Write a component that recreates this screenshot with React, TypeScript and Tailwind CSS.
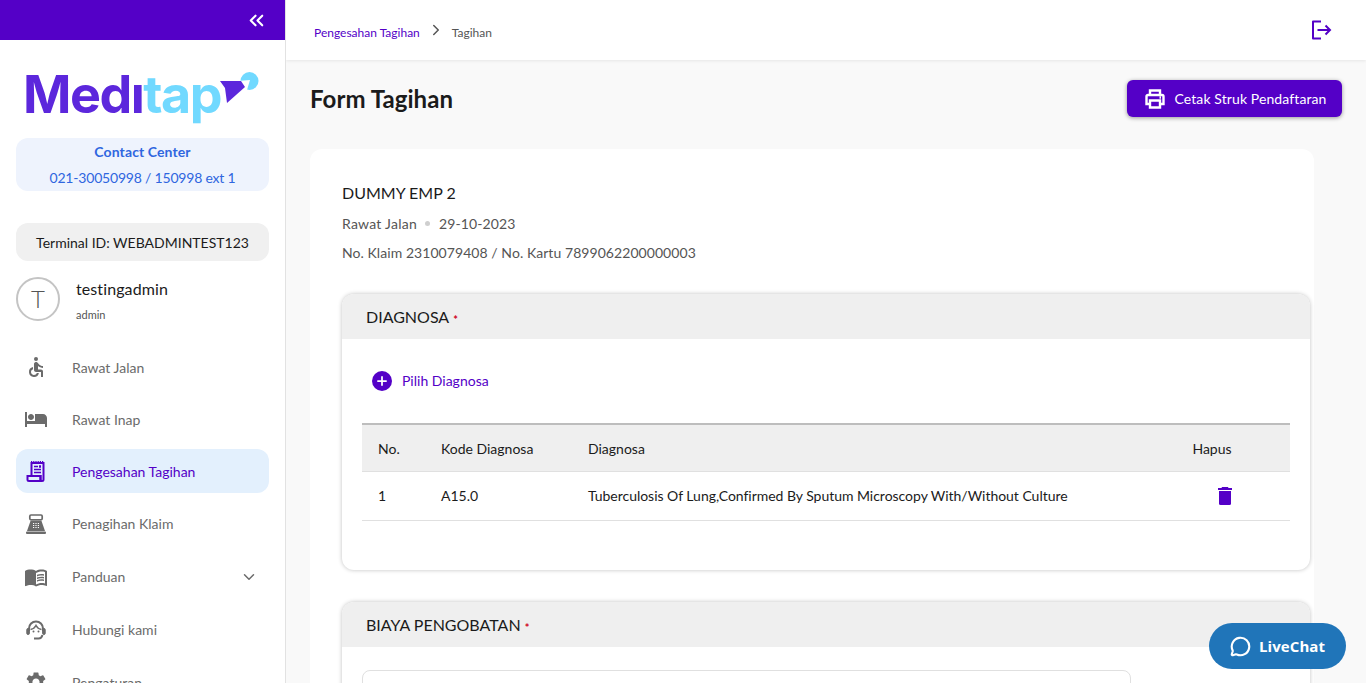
import { ChevronDown, ChevronRight, ChevronsLeft, MessageCircle, Plus } from "lucide-react";
import { MdAccessible, MdHotel, MdMenuBook, MdSettings } from "react-icons/md";
import type { ReactNode } from "react";

function ReceiptIcon() {
  return (
    <svg width="20" height="21" viewBox="0 0 20 21" fill="none" stroke="currentColor" strokeWidth="2">
      <path d="M5.500 15V2h12v16.500a1.500 1.500 0 0 1-3 0V15z" />
      <path d="M1.500 15h13v3.500c0 .8.5 1.500 1.500 1.500H3a1.500 1.500 0 0 1-1.500-1.500z" />
      <path d="M5 .8h13" strokeDasharray="1.200 1" strokeWidth="1.400" />
      <path d="M8 5.500h4M8 8.500h7M8 11.500h7" strokeWidth="1.500" />
      <path d="M13 5.500h2" strokeWidth="2.500" />
    </svg>
  );
}

function RegisterIcon() {
  return (
    <svg width="20" height="20" viewBox="0 0 20 20" fill="currentColor">
      <rect x="3.800" y="1" width="12.400" height="4.800" rx="1.200" fill="none" stroke="currentColor" strokeWidth="1.700" />
      <path d="M4.500 7h11l3.500 10H1z" />
      <rect x="0" y="17.600" width="20" height="2.400" rx="1" />
      <path d="M7 9.500h6M7 11.500h6M7 13.500h6" stroke="#fff" strokeWidth="1.100" strokeDasharray="1.200 1.200" />
    </svg>
  );
}

function HeadsetIcon() {
  return (
    <svg width="20" height="20" viewBox="0 0 20 20" fill="none" stroke="currentColor" strokeWidth="2">
      <path d="M3 11V8.500a7 7 0 0 1 14 0V11" />
      <path d="M4.500 9.500c2.500-.5 4.500-2 5.500-4 1 2 3 3.500 5.500 4" strokeWidth="1.600" />
      <rect x="0.800" y="8.500" width="2.600" height="6" rx="1.200" fill="currentColor" strokeWidth="1" />
      <rect x="16.600" y="8.500" width="2.600" height="6" rx="1.200" fill="currentColor" strokeWidth="1" />
      <path d="M16.500 15c-.5 2-1.500 3.500-4 3.500H8" />
      <circle cx="7.500" cy="11.500" r="1" fill="currentColor" stroke="none" />
      <circle cx="12.500" cy="11.500" r="1" fill="currentColor" stroke="none" />
    </svg>
  );
}

function PrinterIcon() {
  return (
    <svg width="20" height="20" viewBox="0 0 20 20" fill="none" stroke="currentColor" strokeWidth="2.400">
      <path d="M5 6V1.500h10V6" />
      <path d="M5 15H1.500V7.500A1.500 1.500 0 0 1 3 6h14a1.500 1.500 0 0 1 1.500 1.500V15H15" />
      <path d="M5 11.500h10v7H5z" />
      <path d="M14.500 8.500H16" />
    </svg>
  );
}

function LogoutIcon() {
  return (
    <svg width="21" height="20" viewBox="0 0 21 20" fill="none" stroke="currentColor" strokeWidth="2">
      <path d="M10 1.500H2v17h8" strokeLinejoin="round" />
      <path d="M6.500 10H19M14.500 5.500 19 10l-4.500 4.500" />
    </svg>
  );
}

function TrashIcon() {
  return (
    <svg width="14" height="18" viewBox="0 0 14 18" fill="currentColor">
      <path d="M4 0h6l.5 1H14v2H0V1h3.500z" />
      <path d="M1 4h12v12.500a1.500 1.500 0 0 1-1.500 1.500h-9A1.500 1.500 0 0 1 1 16.500z" />
    </svg>
  );
}

function NavItem({
  icon,
  label,
  active,
  chevron,
  tall,
}: {
  icon: ReactNode;
  label: string;
  active?: boolean;
  chevron?: boolean;
  tall?: boolean;
}) {
  return (
    <div
      className={`flex shrink-0 items-center rounded-xl ${tall ? "h-[45px]" : "h-11"} ${
        active ? "bg-[#e3f0fd] text-[#5400c7]" : "text-[#6b6b6b]"
      }`}
    >
      <div className="flex w-14 justify-center pr-4 text-2xl">{icon}</div>
      <span className="text-[14px]">{label}</span>
      {chevron && <ChevronDown size={18} strokeWidth={2} className="mr-[11px] ml-auto" />}
    </div>
  );
}

function Sidebar() {
  return (
    <aside className="flex h-full w-[286px] shrink-0 flex-col overflow-hidden border-r border-[#e2e2e2] bg-white">
      <div className="flex h-10 shrink-0 items-center justify-end bg-[#5400c7] pr-[17px] text-white">
        <ChevronsLeft size={23} strokeWidth={2.2} />
      </div>

      <div className="flex h-[98px] shrink-0 items-start pt-[25px] pl-[23px]">
        <div className="relative h-[60px] w-[240px]">
          <span className="font-['Inter',sans-serif] text-[52px] leading-[60px] font-bold tracking-[-1.5px] text-[#5c27dc]">
            Medı<span className="text-[#71d9ff]">tap</span>
          </span>
          <svg width="42" height="36" viewBox="0 0 42 36" className="absolute top-[5px] left-[197px]">
            <circle cx="29.500" cy="11" r="9" fill="#71d9ff" />
            <path d="M18 11l12-1-3 10-4 0z" fill="#fff" />
            <path d="M0 11h21l4 6-18 16-2-15z" fill="#5c27dc" />
          </svg>
        </div>
      </div>

      <div className="mx-4 flex h-[53px] shrink-0 flex-col items-center justify-center gap-[6px] rounded-xl bg-[#eef3fd] text-[#2f66e0]">
        <span className="text-[14px] leading-5 font-bold tracking-[0.1px]">Contact Center</span>
        <span className="text-[14px] leading-5 tracking-[-0.2px]">021-30050998 / 150998 ext 1</span>
      </div>

      <div className="mx-4 mt-8 flex h-[38px] shrink-0 items-center justify-center rounded-xl bg-[#f0f0f0] text-[14px] text-[#1b1b1b]">
        Terminal ID: WEBADMINTEST123
      </div>

      <div className="mx-4 mt-4 flex shrink-0 items-start gap-4">
        <div className="flex h-11 w-11 items-center justify-center rounded-full border-2 border-[#c4c4c4] text-[24px] font-light text-[#555]">
          T
        </div>
        <div className="flex flex-col">
          <span className="text-base leading-6 tracking-[0.1px] text-[#1b1b1b]">testingadmin</span>
          <span className="mt-[6px] text-[11px] leading-4 text-[#555]">admin</span>
        </div>
      </div>

      <nav className="mx-4 mt-[22px] flex flex-col gap-2">
        <NavItem icon={<MdAccessible />} label="Rawat Jalan" />
        <NavItem icon={<MdHotel />} label="Rawat Inap" />
        <NavItem icon={<ReceiptIcon />} label="Pengesahan Tagihan" active />
        <NavItem icon={<RegisterIcon />} label="Penagihan Klaim" tall />
        <NavItem icon={<MdMenuBook />} label="Panduan" chevron tall />
        <NavItem icon={<HeadsetIcon />} label="Hubungi kami" tall />
        <NavItem icon={<MdSettings />} label="Pengaturan" />
      </nav>
    </aside>
  );
}

function SectionTitle({ title }: { title: string }) {
  return (
    <div className="flex h-[45px] items-center gap-1 rounded-t-xl bg-[#efefef] px-6">
      <span className="text-base text-[#1b1b1b]">{title}</span>
      <span className="mt-[5px] text-[11px] leading-none font-bold text-[#d0021b]">*</span>
    </div>
  );
}

export default function App() {
  return (
    <div className="flex h-[683px] w-full overflow-hidden bg-[#f9f9f9] font-['Lato',sans-serif]">
      <Sidebar />
      <main className="flex h-full min-w-0 flex-1 flex-col overflow-hidden">
        <header className="flex h-[60px] shrink-0 items-center bg-white pr-[34px] pl-7 shadow-[0_1px_3px_rgba(0,0,0,0.08)]">
          <span className="pt-[5px] text-xs text-[#5400c7]">Pengesahan Tagihan</span>
          <ChevronRight size={18} strokeWidth={2} className="mx-[7px] text-[#555]" />
          <span className="pt-[5px] text-xs text-[#555]">Tagihan</span>
          <div className="ml-auto text-[#5400c7]">
            <LogoutIcon />
          </div>
        </header>

        <div className="mb-[12px] flex h-[77px] shrink-0 items-center justify-between px-6">
          <h1 className="text-2xl font-bold tracking-[0.05px] text-[#1b1b1b]">Form Tagihan</h1>
          <button className="flex h-[37px] w-[215px] items-center justify-center gap-[10px] rounded-md bg-[#5400c7] pl-[2px] text-[14px] tracking-[0.1px] text-white shadow-[0_1px_4px_rgba(0,0,0,0.4)]">
            <PrinterIcon />
            Cetak Struk Pendaftaran
          </button>
        </div>

        <div className="ml-6 w-[1004px] flex-1 rounded-t-xl bg-white px-8 pt-[32px]">
          <div className="text-base leading-[24px] text-[#1b1b1b]">DUMMY EMP 2</div>
          <div className="mt-[8px] flex h-[20px] items-center text-[14px] text-[#555]">
            <span className="tracking-[0.25px]">Rawat Jalan</span>
            <span className="mx-[8px] h-[5px] w-[5px] rounded-full bg-[#cfcfcf]" />
            <span className="ml-[1px] tracking-[0.1px]">29-10-2023</span>
          </div>
          <div className="mt-[10px] text-[14px] leading-5 tracking-[0.06px] text-[#555]">
            No. Klaim 2310079408 / No. Kartu 7899062200000003
          </div>

          <section className="mt-[31px] h-[276px] w-[968px] rounded-xl bg-white shadow-[0_0_4px_rgba(0,0,0,0.25)]">
            <SectionTitle title="DIAGNOSA" />
            <div className="px-5">
              <div className="flex h-[84px] items-center gap-[10px] pb-[1px] pl-[10px] text-[14px] text-[#5400c7]">
                <span className="flex h-5 w-5 items-center justify-center rounded-full bg-[#5400c7] text-white">
                  <Plus size={14} strokeWidth={3} />
                </span>
                Pilih Diagnosa
              </div>
              <table className="w-full table-fixed border-t-2 border-[#bdbdbd] text-[14px] text-[#1b1b1b]">
                <thead>
                  <tr className="h-[47px] border-b border-[#e0e0e0] bg-[#efefef] text-left">
                    <th className="w-[79px] pt-[2px] pl-4 font-normal">No.</th>
                    <th className="w-[147px] pt-[2px] font-normal">Kode Diagnosa</th>
                    <th className="pt-[2px] font-normal">Diagnosa</th>
                    <th className="w-[156px] pt-[2px] text-center font-normal">Hapus</th>
                  </tr>
                </thead>
                <tbody>
                  <tr className="h-[49px] border-b border-[#e0e0e0]">
                    <td className="pl-4">1</td>
                    <td>A15.0</td>
                    <td className="tracking-[-0.03px]">Tuberculosis Of Lung,Confirmed By Sputum Microscopy With/Without Culture</td>
                    <td className="pl-[26px]">
                      <div className="flex justify-center text-[#5400c7]">
                        <TrashIcon />
                      </div>
                    </td>
                  </tr>
                </tbody>
              </table>
            </div>
          </section>

          <section className="mt-[32px] w-[968px] rounded-t-xl bg-white pb-6 shadow-[0_0_4px_rgba(0,0,0,0.25)]">
            <SectionTitle title="BIAYA PENGOBATAN" />
            <div className="px-5 pt-[24px]">
              <div className="-mt-[1px] h-20 w-[769px] rounded-lg border border-[#e0e0e0]" />
            </div>
          </section>
        </div>
      </main>

      <button className="absolute top-[623px] left-[1209px] flex h-[46px] w-[137px] items-center justify-center gap-[8px] rounded-full bg-[#2075b9] font-['Open_Sans',sans-serif] text-[15px] font-bold tracking-[0.1px] text-white">
        <MessageCircle size={21} strokeWidth={2.4} />
        LiveChat
      </button>
    </div>
  );
}
